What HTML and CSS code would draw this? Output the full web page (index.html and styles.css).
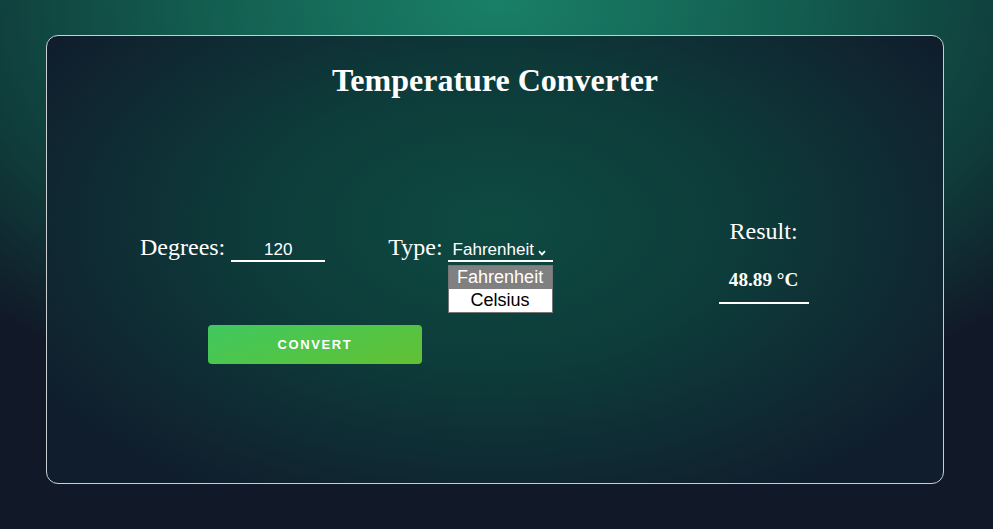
FILE: index.html
```html
<!DOCTYPE html>
<html lang="en">
<head>
<meta charset="utf-8">
<title>Temperature Converter</title>
<link rel="stylesheet" href="styles.css">
</head>
<body>
<div class="card">
  <h1 class="title">Temperature Converter</h1>
  <div class="content">
    <div class="left">
      <div class="fields">
        <label class="label" for="deg">Degrees:</label>
        <input id="deg" class="deg-input" type="text" value="120">
        <span class="label type-label">Type:</span>
        <div class="select">
          <span class="select-text">Fahrenheit</span>
          <svg class="chev" width="8" height="6" viewBox="0 0 8 6"><path d="M1 1.2 L4 4.4 L7 1.2" fill="none" stroke="#fff" stroke-width="1.7"/></svg>
          <div class="dropdown">
            <div class="opt opt-active">Fahrenheit</div>
            <div class="opt">Celsius</div>
          </div>
        </div>
      </div>
      <button class="convert">CONVERT</button>
    </div>
    <div class="result">
      <div class="label">Result:</div>
      <div class="result-value">48.89 °C</div>
    </div>
  </div>
</div>
</body>
</html>
```
FILE: styles.css
```css
* { box-sizing: border-box; }
html, body { margin: 0; height: 100%; }
body {
  min-height: 529px;
  overflow: hidden;
  padding-top: 35px;
  background: radial-gradient(ellipse 720px 440px at 50% 0%, #198068 0%, #135e50 40%, #0f3b3a 75%, #111827 100%) #111827;
  font-family: "Liberation Serif", "Times New Roman", serif;
  color: #fff;
}
.card {
  width: 898px;
  height: 449px;
  margin-left: 46px;
  border: 1px solid #c9ced3;
  border-radius: 12px;
  padding-top: 24px;
  background: radial-gradient(ellipse 540px 320px at 50% 42%, #0e4a41 0%, #0d3c3a 45%, #0f2b33 75%, #101d2c 100%);
}
.title {
  margin: 0;
  text-align: center;
  font-size: 32px;
  line-height: 40px;
  font-weight: bold;
}
.content {
  display: flex;
  margin-top: 118px;
  padding-left: 93px;
}
.left {
  display: flex;
  flex-direction: column;
  padding-top: 16px;
}
.fields {
  display: flex;
  align-items: baseline;
}
.label {
  font-size: 24px;
  line-height: 26px;
}
.deg-input {
  margin-left: 6px;
  width: 94px;
  height: 22px;
  padding: 0;
  border: none;
  border-bottom: 2px solid #fff;
  background: transparent;
  color: #fff;
  text-align: center;
  font-family: "Liberation Sans", Arial, sans-serif;
  font-size: 17px;
  outline: none;
}
.type-label { margin-left: 63px; }
.select {
  position: relative;
  margin-left: 5px;
  width: 105px;
  height: 22px;
  border-bottom: 2px solid #fff;
  display: flex;
  align-items: baseline;
  padding-left: 5px;
  font-family: "Liberation Sans", Arial, sans-serif;
  font-size: 17px;
  line-height: 20px;
}
.chev { margin-left: 4px; align-self: center; margin-top: 5px; }
.dropdown {
  position: absolute;
  top: 25px;
  left: 0;
  width: 105px;
  border: 1px solid #767676;
  background: #fff;
  font-size: 18px;
  line-height: 23px;
  text-align: center;
  color: #000;
  z-index: 2;
}
.opt-active { background: #808080; color: #fff; }
.convert {
  margin-top: 63px;
  margin-left: 68px;
  width: 214px;
  height: 39px;
  border: none;
  border-radius: 4px;
  background: linear-gradient(160deg, #40c860 0%, #50c548 50%, #63c034 100%);
  color: #fff;
  font-family: "Liberation Sans", Arial, sans-serif;
  font-weight: bold;
  font-size: 13px;
  letter-spacing: 1.6px;
  padding: 0;
}
.result {
  margin-left: 131px;
  width: 160px;
  display: flex;
  flex-direction: column;
  align-items: center;
}
.result-value {
  margin-top: 24px;
  width: 90px;
  text-align: center;
  font-weight: bold;
  font-size: 19.2px;
  line-height: 24px;
  padding-bottom: 10px;
  border-bottom: 2px solid #fff;
  white-space: nowrap;
}
```
